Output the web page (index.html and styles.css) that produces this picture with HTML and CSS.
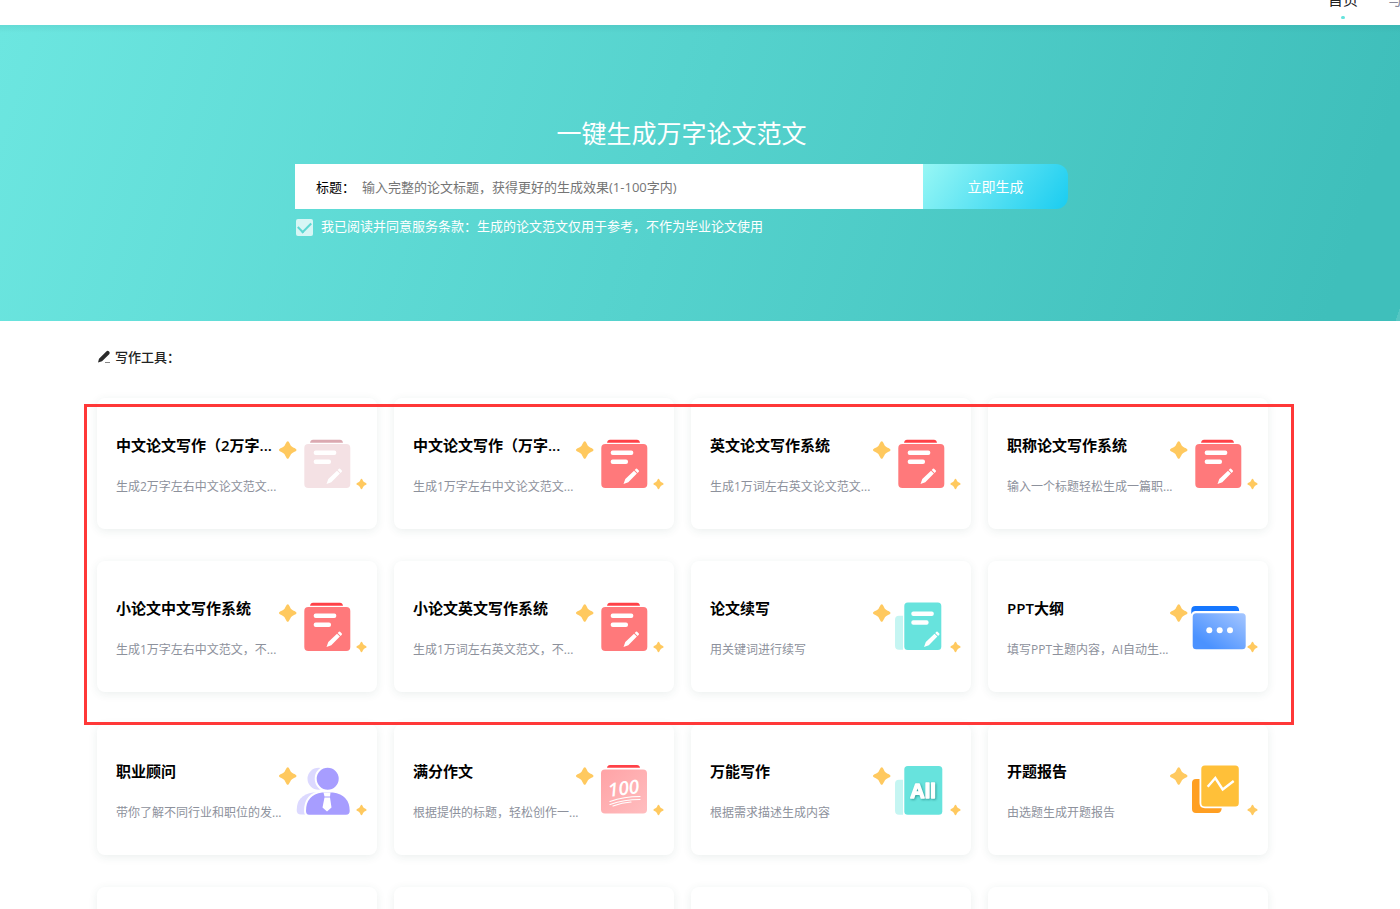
FILE: index.html
```html
<!DOCTYPE html>
<html lang="zh-CN">
<head>
<meta charset="utf-8">
<title>论文写作</title>
<link rel="stylesheet" href="styles.css">
</head>
<body>
<svg class="sprite" aria-hidden="true">
  <defs>
    <linearGradient id="blue" x1="0" y1="1" x2="1" y2="0"><stop offset="0.2" stop-color="#4b92ff"/><stop offset="1" stop-color="#a5c6ff"/></linearGradient>
    <linearGradient id="pink" x1="0" y1="0" x2="1" y2="1"><stop offset="0" stop-color="#ffa3a6"/><stop offset="1" stop-color="#ffbdbf"/></linearGradient>
    <symbol id="star" viewBox="0 0 20 20" overflow="visible"><path d="M10 0.500C11.500 0.500 12.500 4.500 14 6C15.500 7.500 19.500 8.500 19.500 10S15.500 12.500 14 14C12.500 15.500 11.500 19.500 10 19.500S7.500 15.500 6 14C4.500 12.500 0.500 11.500 0.500 10S4.500 7.500 6 6C7.500 4.500 8.500 0.500 10 0.500Z" fill="#ffc95f"/></symbol>
    <symbol id="pencil" viewBox="0 0 17 17"><path d="M0.500 16.500L2.300 11.500L11 3.200L13.900 6.100L5.300 14.700Z M11.700 2.500L12.900 1.300Q13.500 0.800 14.100 1.300L15.800 3Q16.300 3.600 15.800 4.200L14.600 5.400Z" fill="#fff"/></symbol>
    <symbol id="doc" viewBox="0 0 92 56">
      <path d="M33 6.800Q33.500 3.800 36 3.800H63Q65.500 3.800 66 6.800Z" fill="#ff4147"/>
      <rect x="27.300" y="8" width="46" height="44" rx="4" fill="#ff797b"/>
      <rect x="36.700" y="14.500" width="22.600" height="4.500" rx="2" fill="#fff"/>
      <rect x="36.700" y="23.500" width="17.300" height="4.500" rx="2" fill="#fff"/>
      <use href="#pencil" x="49" y="31.500" width="17" height="17"/>
    </symbol>
    <symbol id="stars" viewBox="0 0 92 56">
      <use href="#star" x="1.500" y="4.500" width="18.500" height="19"/>
      <use href="#star" x="79" y="42.500" width="11" height="11"/>
    </symbol>
  </defs>
</svg>

<header class="topbar">
  <nav class="nav">
    <a class="nav-item nav-active" href="#">首页</a>
    <a class="nav-item" href="#">写作</a>
  </nav>
</header>

<section class="hero">
  <form class="generator">
    <h1 class="hero-title">一键生成万字论文范文</h1>
    <div class="search">
      <div class="search-field">
        <label for="topic">标题：</label>
        <input class="search-input" id="topic" type="text" placeholder="输入完整的论文标题，获得更好的生成效果(1-100字内)">
      </div>
      <button class="search-button" type="button">立即生成</button>
    </div>
    <div class="consent">
      <input class="consent-box" id="agree" type="checkbox" checked>
      <label for="agree">我已阅读并同意服务条款：生成的论文范文仅用于参考，不作为毕业论文使用</label>
    </div>
  </form>
</section>

<main class="tools">
  <h2 class="tools-title">
    <svg class="tools-icon" viewBox="0 0 14 14" aria-hidden="true"><path d="M1 12.500L2 8.800L9.300 1.500Q10.500 0.300 11.800 1.300L12.300 1.800Q13.300 3 12.200 4.200L5 11.300Z" fill="#2b2b2b"/><path d="M8 12.500H13" stroke="#888" stroke-width="1"/></svg>
    写作工具：
  </h2>
  <div class="grid">
    <a class="card" href="#">
      <div class="card-text"><h3 class="card-title">中文论文写作（2万字...</h3><p class="card-desc">生成2万字左右中文论文范文...</p></div>
      <svg class="card-icon" viewBox="0 0 92 56" aria-hidden="true"><use href="#stars"/>
        <path d="M33 6.800Q33.500 3.800 36 3.800H63Q65.500 3.800 66 6.800Z" fill="#dba9b1"/>
        <rect x="27.300" y="8" width="46" height="44" rx="4" fill="#f4e1e4"/>
        <rect x="36.700" y="14.500" width="22.600" height="4.500" rx="2" fill="#fff"/>
        <rect x="36.700" y="23.500" width="17.300" height="4.500" rx="2" fill="#fff"/>
        <use href="#pencil" x="49" y="31.500" width="17" height="17"/>
      </svg>
    </a>
    <a class="card" href="#">
      <div class="card-text"><h3 class="card-title">中文论文写作（万字...</h3><p class="card-desc">生成1万字左右中文论文范文...</p></div>
      <svg class="card-icon" viewBox="0 0 92 56" aria-hidden="true"><use href="#stars"/><use href="#doc"/></svg>
    </a>
    <a class="card" href="#">
      <div class="card-text"><h3 class="card-title">英文论文写作系统</h3><p class="card-desc">生成1万词左右英文论文范文...</p></div>
      <svg class="card-icon" viewBox="0 0 92 56" aria-hidden="true"><use href="#stars"/><use href="#doc"/></svg>
    </a>
    <a class="card" href="#">
      <div class="card-text"><h3 class="card-title">职称论文写作系统</h3><p class="card-desc">输入一个标题轻松生成一篇职...</p></div>
      <svg class="card-icon" viewBox="0 0 92 56" aria-hidden="true"><use href="#stars"/><use href="#doc"/></svg>
    </a>
    <a class="card" href="#">
      <div class="card-text"><h3 class="card-title">小论文中文写作系统</h3><p class="card-desc">生成1万字左右中文范文，不...</p></div>
      <svg class="card-icon" viewBox="0 0 92 56" aria-hidden="true"><use href="#stars"/><use href="#doc"/></svg>
    </a>
    <a class="card" href="#">
      <div class="card-text"><h3 class="card-title">小论文英文写作系统</h3><p class="card-desc">生成1万词左右英文范文，不...</p></div>
      <svg class="card-icon" viewBox="0 0 92 56" aria-hidden="true"><use href="#stars"/><use href="#doc"/></svg>
    </a>
    <a class="card" href="#">
      <div class="card-text"><h3 class="card-title">论文续写</h3><p class="card-desc">用关键词进行续写</p></div>
      <svg class="card-icon" viewBox="0 0 92 56" aria-hidden="true"><use href="#stars"/>
        <path d="M32 16.700H28Q24 16.700 24 20.700V46.700Q24 50.700 28 50.700H32Z" fill="#c5f5f2"/>
        <rect x="33.300" y="3.500" width="37" height="47.500" rx="3.500" fill="#67e3dd"/>
        <rect x="40.300" y="12.500" width="22.500" height="4.500" rx="2" fill="#fff"/>
        <rect x="40.300" y="21.300" width="17.300" height="4.500" rx="2" fill="#fff"/>
        <use href="#pencil" x="52.500" y="31.500" width="17" height="17"/>
      </svg>
    </a>
    <a class="card" href="#">
      <div class="card-text"><h3 class="card-title">PPT大纲</h3><p class="card-desc">填写PPT主题内容，AI自动生...</p></div>
      <svg class="card-icon" viewBox="0 0 92 56" aria-hidden="true"><use href="#stars"/>
        <path d="M23.300 15V11Q23.300 7 27.300 7H67Q71 7 71.200 12H27Q24.500 12 23.300 15Z" fill="#1677ff"/>
        <rect x="24.700" y="14.300" width="53" height="36" rx="3.500" fill="url(#blue)"/>
        <circle cx="41.300" cy="31.300" r="3" fill="#fff"/><circle cx="51.700" cy="31.300" r="3" fill="#fff"/><circle cx="62" cy="31.300" r="3" fill="#fff"/>
      </svg>
    </a>
    <a class="card" href="#">
      <div class="card-text"><h3 class="card-title">职业顾问</h3><p class="card-desc">带你了解不同行业和职位的发...</p></div>
      <svg class="card-icon" viewBox="0 0 92 56" aria-hidden="true"><use href="#stars"/>
        <circle cx="41.500" cy="16.700" r="11" fill="#dcd9ff"/>
        <path d="M36 30.500Q19.700 33 19.700 48Q19.700 52.500 24 52.500H40V30.500Z" fill="#dcd9ff"/>
        <circle cx="50.700" cy="16.700" r="12" fill="#a79dff" stroke="#fff" stroke-width="2"/>
        <path d="M45 29.500H56Q73.700 32 73.700 49Q73.700 53.700 69 53.700H32Q28 53.700 28 49Q28 32 45 29.500Z" fill="#a79dff" stroke="#fff" stroke-width="2"/>
        <path d="M46.500 30.500H53.500L53 34.500H47.500Z M47.500 35.500H53L54.500 45.500L50 49.500L45.500 45.500Z" fill="#fff"/>
      </svg>
    </a>
    <a class="card" href="#">
      <div class="card-text"><h3 class="card-title">满分作文</h3><p class="card-desc">根据提供的标题，轻松创作一...</p></div>
      <svg class="card-icon" viewBox="0 0 92 56" aria-hidden="true"><use href="#stars"/>
        <path d="M33 5.800Q33.500 3 36 3H63Q65.500 3 66 5.800Z" fill="#ff4147"/>
        <rect x="27" y="7.500" width="46" height="44" rx="4" fill="url(#pink)"/>
        <text class="icon-score" x="50" y="33" text-anchor="middle" transform="rotate(-7 50 30)">100</text>
        <path d="M36 39.500Q50 34.500 66 34.500M36 42.500Q50 37.500 66 37.500M39 44Q48 40.500 57 40" fill="none" stroke="#fff" stroke-width="1.200" stroke-linecap="round"/>
      </svg>
    </a>
    <a class="card" href="#">
      <div class="card-text"><h3 class="card-title">万能写作</h3><p class="card-desc">根据需求描述生成内容</p></div>
      <svg class="card-icon" viewBox="0 0 92 56" aria-hidden="true"><use href="#stars"/>
        <path d="M32 17.700H28Q24 17.700 24 21.700V48.700Q24 52.700 28 52.700H32Z" fill="#c5f5f2"/>
        <rect x="33.300" y="4" width="38" height="48.700" rx="3.500" fill="#67e3dd"/>
        <text class="icon-all" x="52" y="36" text-anchor="middle">All</text>
      </svg>
    </a>
    <a class="card" href="#">
      <div class="card-text"><h3 class="card-title">开题报告</h3><p class="card-desc">由选题生成开题报告</p></div>
      <svg class="card-icon" viewBox="0 0 92 56" aria-hidden="true"><use href="#stars"/>
        <path d="M31.500 17H28Q24 17 24 21V47Q24 51 28 51H49.500Q53.500 51 53.700 46.200H37Q31.500 46.200 31.500 41Z" fill="#ff9f22"/>
        <rect x="33.300" y="3.500" width="37.500" height="41" rx="3.500" fill="#ffc039"/>
        <path d="M39.700 24.700L47.300 16L54.700 27.500L65.700 19" fill="none" stroke="#fff" stroke-width="2.400"/>
      </svg>
    </a>
    <div class="card"></div>
    <div class="card"></div>
    <div class="card"></div>
    <div class="card"></div>
    <div class="highlight"></div>
  </div>
</main>
</body>
</html>
```
FILE: styles.css
```css
* {
  box-sizing: border-box;
}

html {
  overflow: hidden;
}

body {
  margin: 0;
  height: 100vh;
  overflow: hidden;
  background: #fff;
  color: #000;
  font-family: "Open Sans", "Noto Sans CJK SC", sans-serif;
  font-size: 13px;
}

h1, h2, h3, p {
  margin: 0;
}

.sprite {
  position: absolute;
  width: 0;
  height: 0;
}

.topbar {
  display: flex;
  justify-content: flex-end;
  align-items: flex-end;
  height: 25px;
  overflow: hidden;
}

.nav {
  display: flex;
  gap: 30px;
  width: 72px;
  overflow: hidden;
  white-space: nowrap;
}

.nav-item {
  flex: none;
  height: 36px;
  color: #8a8a99;
  font-size: 15px;
  line-height: 20px;
  text-decoration: none;
}

.nav-active {
  color: #222;
}

.nav-active::after {
  content: "";
  display: block;
  width: 4px;
  height: 3px;
  margin: 7px auto 0;
  border-radius: 2px;
  background: #67e3dd;
}

.hero {
  padding: 91px 37px 0 0;
  min-height: 296px;
  background:
    linear-gradient(108deg, transparent 0 99.7%, rgba(255, 255, 255, 0.12) 99.7%),
    linear-gradient(180deg, rgba(0, 80, 80, 0.07), transparent 8px),
    linear-gradient(108deg, #6ce6e0, #3fbfbb 95%);
}

.generator {
  width: 100%;
  max-width: 773px;
  margin: 0 auto;
}

.hero-title {
  margin-bottom: 14px;
  color: #fff;
  font-size: 25px;
  font-weight: 400;
  line-height: 34px;
  text-align: center;
}

.search {
  display: flex;
  height: 45px;
}

.search-field {
  display: flex;
  flex: 1;
  align-items: center;
  gap: 7px;
  padding-left: 21px;
  background: #fff;
}

.search-input {
  flex: 1;
  padding: 0;
  border: 0;
  outline: 0;
  background: none;
  font: inherit;
}

.search-input::placeholder {
  color: #757575;
}

.search-button {
  width: 145px;
  padding: 0 0 2px;
  border: 0;
  border-radius: 0 12px 12px 0;
  background: linear-gradient(125deg, #97f7f5, #1accf0);
  color: #fff;
  font: inherit;
  font-size: 14px;
}

.consent {
  display: flex;
  align-items: flex-end;
  gap: 8px;
  margin-top: 8px;
  padding-left: 1px;
  color: #fff;
  line-height: 19px;
}

.consent-box {
  display: grid;
  place-items: center;
  appearance: none;
  width: 17px;
  height: 17px;
  margin: 0;
  border-radius: 2px;
  background: rgba(255, 255, 255, 0.75);
}

.consent-box:checked::after {
  content: "";
  width: 11px;
  height: 6px;
  margin-bottom: 3px;
  border: solid #5ed8d3;
  border-width: 0 0 2px 2px;
  transform: rotate(-45deg);
}

.tools {
  padding: 26px 35px 0 0;
}

.tools-title {
  display: flex;
  align-items: center;
  gap: 4px;
  width: 100%;
  max-width: 1171px;
  margin: 0 auto 31px;
  color: #222;
  font-size: 13px;
  font-weight: 500;
  line-height: 20px;
}

.tools-icon {
  width: 14px;
  height: 14px;
}

.grid {
  position: relative;
  display: grid;
  grid-template-columns: repeat(4, minmax(0, 1fr));
  gap: 32px 17px;
  width: 100%;
  max-width: 1171px;
  margin: 0 auto;
}

.card {
  display: flex;
  align-items: flex-start;
  min-height: 131px;
  padding: 38px 8px 32px 19px;
  border-radius: 8px;
  background: #fff;
  box-shadow: 0 2px 10px rgba(30, 80, 70, 0.09);
  color: inherit;
  text-decoration: none;
}

.card-text {
  flex: 1;
  min-width: 0;
  white-space: nowrap;
}

.card-title {
  margin-bottom: 23px;
  font-size: 15px;
  font-weight: 600;
  line-height: 18px;
}

.card-desc {
  color: #8d919c;
  font-size: 12px;
  line-height: 20px;
}

.card-icon {
  flex: none;
  width: 92px;
  height: 56px;
}

.icon-score {
  fill: #fff;
  font: italic 600 19px "Open Sans", sans-serif;
}

.icon-all {
  fill: #fff;
  stroke: #fff;
  stroke-width: 1.5;
  stroke-linejoin: round;
  font: bold 20px "Liberation Sans", sans-serif;
  filter: drop-shadow(1px 1px 1px rgba(20, 120, 115, 0.6));
}

.highlight {
  position: absolute;
  top: 6px;
  right: -26px;
  left: -13px;
  height: 321px;
  border: 3px solid #ff3838;
}
```
